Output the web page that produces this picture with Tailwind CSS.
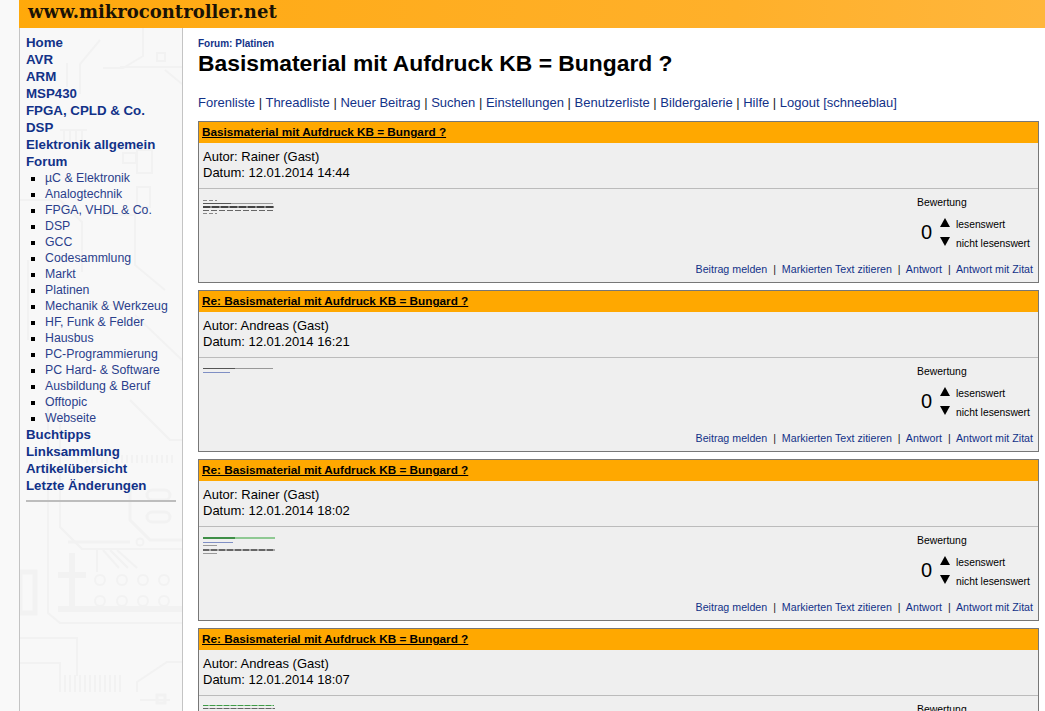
<!DOCTYPE html>
<html lang="de">

<head>
  <meta charset="UTF-8" />
  <title>Basismaterial mit Aufdruck KB = Bungard ?</title>
  <script src="https://cdn.jsdelivr.net/npm/@tailwindcss/browser@4"></script>
</head>

<body class="bg-[#f9f9f9] text-black h-[711px] overflow-hidden font-['Liberation_Sans',Arial,sans-serif]">
  <div class="flex flex-col h-full pl-[19px]">
    <!-- header -->
    <div class="h-[28px] shrink-0 pl-[9px] bg-gradient-to-r from-[#ffa90a] via-[#ffb02a] via-70% to-[#ffb63c] font-['DejaVu_Serif',serif] font-bold text-[18px] leading-[24px] text-[#1a1205]">www.mikrocontroller.net</div>

    <div class="flex flex-1 min-h-0">
      <!-- sidebar -->
      <div class="relative w-[164px] shrink-0 border-x border-[#c4c4c4] bg-[#f8f8f8] pl-[6px] pr-[6px] pt-[6px]">
        <!-- circuit board background, page coordinates -->
        <svg class="absolute inset-0 w-full h-full" viewBox="20 28 162 683" fill="none" stroke="#f2f2f2" stroke-width="2">
          <path d="M143 28v28l-20 12h-20M120 67h62M157 53h8v8h-8zM67 63v24M100 40l-20 24v30M165 70l17 14" />
          <path d="M60 130h27M64 130v20M70 130v20M76 130v20M82 130v20M137 150h15v23h-15zM137 187h13v20h-13zM123 153h13v10h-13z" />
          <path d="M20 200h40l22 22v50M100 215h35v50l30 25M95 305h50M135 315l47 45M28 260v80" />
          <path d="M48 400v213l12 10h122M60 400v127l22 22h100M130 400l40 40h12" />
          <path d="M87 455v8M92 455v8M97 455v8M102 455v8M107 455v8M112 455v8M117 455v8M122 455v8M127 455v8M132 455v8M137 455v8M142 455v8M147 455v8M152 455v8M157 455v8M162 455v8M167 455v8M172 455v8" />
          <rect x="147" y="490" width="23" height="10" rx="5" stroke-width="3" />
          <rect x="147" y="512" width="23" height="10" rx="5" stroke-width="3" />
          <path d="M130 480v40l20 20h32M68 542h62" stroke-width="3" />
          <circle cx="140" cy="542" r="3.5" />
          <path d="M97 550v22M103 550l16 18M110 550l18 18M117 550l20 18" />
          <path d="M72 553v55M58 575h28M58 609h124" stroke-width="6" />
          <path d="M20 572h15v41h-15z" stroke-width="5" />
          <circle cx="100" cy="580" r="5" />
          <circle cx="122" cy="580" r="5" />
          <circle cx="143" cy="580" r="5" />
          <circle cx="164" cy="580" r="5" />
          <circle cx="100" cy="601" r="5" />
          <circle cx="122" cy="601" r="5" />
          <circle cx="143" cy="601" r="5" />
          <circle cx="164" cy="601" r="5" />
          <path d="M20 638h57v38M20 663h40v12M137 692v-10l30-20h15M140 700h30" />
          <path d="M60 675v17M65 675v17M70 675v17M75 675v17M80 675v17M85 675v17M90 675v17M95 675v17M100 675v17M105 675v17M110 675v17M115 675v17M120 675v17" />
          <rect x="157" y="695" width="8" height="8" stroke-width="3" />
        </svg>
        <div class="relative">
          <ul class="text-[13.3px] leading-[17px] font-bold text-[#123288]">
            <li>Home</li>
            <li>AVR</li>
            <li>ARM</li>
            <li>MSP430</li>
            <li>FPGA, CPLD &amp; Co.</li>
            <li>DSP</li>
            <li>Elektronik allgemein</li>
            <li>Forum</li>
          </ul>
          <ul class="pl-[19px] list-[square] text-[12.3px] leading-[16px] text-[#2b3f8c] marker:text-black">
            <li>µC &amp; Elektronik</li>
            <li>Analogtechnik</li>
            <li>FPGA, VHDL &amp; Co.</li>
            <li>DSP</li>
            <li>GCC</li>
            <li>Codesammlung</li>
            <li>Markt</li>
            <li>Platinen</li>
            <li>Mechanik &amp; Werkzeug</li>
            <li>HF, Funk &amp; Felder</li>
            <li>Hausbus</li>
            <li>PC-Programmierung</li>
            <li>PC Hard- &amp; Software</li>
            <li>Ausbildung &amp; Beruf</li>
            <li>Offtopic</li>
            <li>Webseite</li>
          </ul>
          <ul class="text-[13.3px] leading-[17px] font-bold text-[#123288]">
            <li>Buchtipps</li>
            <li>Linksammlung</li>
            <li>Artikelübersicht</li>
            <li>Letzte Änderungen</li>
          </ul>
          <div class="mt-[6px] h-[2px] bg-[#bdbdbd]"></div>
        </div>
      </div>

      <!-- main -->
      <div class="flex-1 min-w-0 bg-white pl-[15px] pr-[6px] pt-[10px] overflow-hidden">
        <div class="text-[10px] leading-[12px] font-bold text-[#123288]">Forum: Platinen</div>
        <h1 class="text-[22.85px] leading-[27px] font-bold">Basismaterial mit Aufdruck KB = Bungard ?</h1>
        <div class="mt-[18px] text-[13px] leading-[16px] text-[#222] whitespace-nowrap">
          <span class="text-[#123288]">Forenliste</span> | <span class="text-[#123288]">Threadliste</span> | <span class="text-[#123288]">Neuer Beitrag</span> | <span class="text-[#123288]">Suchen</span> | <span class="text-[#123288]">Einstellungen</span> | <span class="text-[#123288]">Benutzerliste</span> | <span class="text-[#123288]">Bildergalerie</span> | <span class="text-[#123288]">Hilfe</span> | <span class="text-[#123288]">Logout [schneeblau]</span>
        </div>

        <div class="mt-[10px] flex flex-col gap-[7px]">
          <!-- post 1 -->
          <div class="border border-[#777] bg-[#efefef] h-[162px] flex flex-col">
            <div class="h-[21px] shrink-0 bg-[#ffa800] pl-[3px] text-[11.75px] leading-[19px] font-bold underline">Basismaterial mit Aufdruck KB = Bungard ?</div>
            <div class="h-[46px] shrink-0 border-b border-[#bbb] pl-[4px] pt-[6px] text-[13px] leading-[16px]">
              <div>Autor: Rainer (Gast)</div>
              <div>Datum: 12.01.2014 14:44</div>
            </div>
            <div class="flex flex-1 pl-[4px] pr-[5px]">
              <div class="flex-1 pt-[11px] flex flex-col gap-[2px] items-start">
                <div class="h-[1px] w-[14px] bg-[repeating-linear-gradient(90deg,#888_0,#888_4px,transparent_4px,transparent_6px)]"></div>
                <div class="h-[1px] w-[70px] bg-[linear-gradient(90deg,#555_0,#555_40%,#999_40%,#999_100%)]"></div>
                <div class="h-[2px] w-[71px] bg-[repeating-linear-gradient(90deg,#444_0,#444_7px,#888_7px,#888_9px)]"></div>
                <div class="h-[1px] w-[70px] bg-[repeating-linear-gradient(90deg,#666_0,#666_6px,transparent_6px,transparent_8px)]"></div>
                <div class="h-[1px] w-[14px] bg-[repeating-linear-gradient(90deg,#888_0,#888_4px,transparent_4px,transparent_6px)]"></div>
              </div>
              <div class="w-[116px] text-[10.4px] pt-[8px]">
                <div class="leading-[12px]">Bewertung</div>
                <div class="flex items-center mt-[2px]">
                  <div class="text-[20px] w-[17px] ml-[4px]">0</div>
                  <div class="w-[12px] ml-[1px] flex flex-col gap-[10px] items-center">
                    <div class="w-0 h-0 border-x-[5px] border-x-transparent border-b-[9px] border-b-black"></div>
                    <div class="w-0 h-0 border-x-[5px] border-x-transparent border-t-[9px] border-t-black"></div>
                  </div>
                  <div class="ml-[5px] mt-[4px] text-[10.3px] leading-[19px] whitespace-nowrap"><div>lesenswert</div><div>nicht lesenswert</div></div>
                </div>
              </div>
            </div>
            <div class="h-[24px] pt-[4px] text-right pr-[5px] text-[10.67px] leading-[14px] text-[#222] whitespace-nowrap"><span class="text-[#123288]">Beitrag melden</span> &nbsp;|&nbsp; <span class="text-[#123288]">Markierten Text zitieren</span> &nbsp;|&nbsp; <span class="text-[#123288]">Antwort</span> &nbsp;|&nbsp; <span class="text-[#123288]">Antwort mit Zitat</span></div>
          </div>

          <!-- post 2 -->
          <div class="border border-[#777] bg-[#efefef] h-[162px] flex flex-col">
            <div class="h-[21px] shrink-0 bg-[#ffa800] pl-[3px] text-[11.75px] leading-[19px] font-bold underline">Re: Basismaterial mit Aufdruck KB = Bungard ?</div>
            <div class="h-[46px] shrink-0 border-b border-[#bbb] pl-[4px] pt-[6px] text-[13px] leading-[16px]">
              <div>Autor: Andreas (Gast)</div>
              <div>Datum: 12.01.2014 16:21</div>
            </div>
            <div class="flex flex-1 pl-[4px] pr-[5px]">
              <div class="flex-1 pt-[10px] flex flex-col gap-[3px] items-start">
                <div class="h-[1px] w-[70px] bg-[linear-gradient(90deg,#555_0,#555_45%,#999_45%,#999_100%)]"></div>
                <div class="h-[1px] w-[27px] bg-[#7f8fc4]"></div>
              </div>
              <div class="w-[116px] text-[10.4px] pt-[8px]">
                <div class="leading-[12px]">Bewertung</div>
                <div class="flex items-center mt-[2px]">
                  <div class="text-[20px] w-[17px] ml-[4px]">0</div>
                  <div class="w-[12px] ml-[1px] flex flex-col gap-[10px] items-center">
                    <div class="w-0 h-0 border-x-[5px] border-x-transparent border-b-[9px] border-b-black"></div>
                    <div class="w-0 h-0 border-x-[5px] border-x-transparent border-t-[9px] border-t-black"></div>
                  </div>
                  <div class="ml-[5px] mt-[4px] text-[10.3px] leading-[19px] whitespace-nowrap"><div>lesenswert</div><div>nicht lesenswert</div></div>
                </div>
              </div>
            </div>
            <div class="h-[24px] pt-[4px] text-right pr-[5px] text-[10.67px] leading-[14px] text-[#222] whitespace-nowrap"><span class="text-[#123288]">Beitrag melden</span> &nbsp;|&nbsp; <span class="text-[#123288]">Markierten Text zitieren</span> &nbsp;|&nbsp; <span class="text-[#123288]">Antwort</span> &nbsp;|&nbsp; <span class="text-[#123288]">Antwort mit Zitat</span></div>
          </div>

          <!-- post 3 -->
          <div class="border border-[#777] bg-[#efefef] h-[162px] flex flex-col">
            <div class="h-[21px] shrink-0 bg-[#ffa800] pl-[3px] text-[11.75px] leading-[19px] font-bold underline">Re: Basismaterial mit Aufdruck KB = Bungard ?</div>
            <div class="h-[46px] shrink-0 border-b border-[#bbb] pl-[4px] pt-[6px] text-[13px] leading-[16px]">
              <div>Autor: Rainer (Gast)</div>
              <div>Datum: 12.01.2014 18:02</div>
            </div>
            <div class="flex flex-1 pl-[4px] pr-[5px]">
              <div class="flex-1 pt-[10px] flex flex-col gap-[2px] items-start">
                <div class="h-[2px] w-[72px] bg-[linear-gradient(90deg,#3f8f47_0,#3f8f47_45%,#8fc993_45%,#8fc993_100%)]"></div>
                <div class="h-[1px] mt-[1px] w-[30px] bg-[#7f8fc4]"></div>
                <div class="h-[1px] w-[14px] bg-[#999]"></div>
                <div class="h-[2px] mt-[1px] w-[72px] bg-[repeating-linear-gradient(90deg,#666_0,#666_6px,#aaa_6px,#aaa_8px)]"></div>
                <div class="h-[1px] w-[14px] bg-[#999]"></div>
              </div>
              <div class="w-[116px] text-[10.4px] pt-[8px]">
                <div class="leading-[12px]">Bewertung</div>
                <div class="flex items-center mt-[2px]">
                  <div class="text-[20px] w-[17px] ml-[4px]">0</div>
                  <div class="w-[12px] ml-[1px] flex flex-col gap-[10px] items-center">
                    <div class="w-0 h-0 border-x-[5px] border-x-transparent border-b-[9px] border-b-black"></div>
                    <div class="w-0 h-0 border-x-[5px] border-x-transparent border-t-[9px] border-t-black"></div>
                  </div>
                  <div class="ml-[5px] mt-[4px] text-[10.3px] leading-[19px] whitespace-nowrap"><div>lesenswert</div><div>nicht lesenswert</div></div>
                </div>
              </div>
            </div>
            <div class="h-[24px] pt-[4px] text-right pr-[5px] text-[10.67px] leading-[14px] text-[#222] whitespace-nowrap"><span class="text-[#123288]">Beitrag melden</span> &nbsp;|&nbsp; <span class="text-[#123288]">Markierten Text zitieren</span> &nbsp;|&nbsp; <span class="text-[#123288]">Antwort</span> &nbsp;|&nbsp; <span class="text-[#123288]">Antwort mit Zitat</span></div>
          </div>

          <!-- post 4 -->
          <div class="border border-[#777] bg-[#efefef] h-[162px] flex flex-col">
            <div class="h-[21px] shrink-0 bg-[#ffa800] pl-[3px] text-[11.75px] leading-[19px] font-bold underline">Re: Basismaterial mit Aufdruck KB = Bungard ?</div>
            <div class="h-[46px] shrink-0 border-b border-[#bbb] pl-[4px] pt-[6px] text-[13px] leading-[16px]">
              <div>Autor: Andreas (Gast)</div>
              <div>Datum: 12.01.2014 18:07</div>
            </div>
            <div class="flex flex-1 pl-[4px] pr-[5px]">
              <div class="flex-1 pt-[9px] flex flex-col gap-[2px] items-start">
                <div class="h-[1px] w-[71px] bg-[repeating-linear-gradient(90deg,#3f9a47_0,#3f9a47_5px,#8fc993_5px,#8fc993_7px)]"></div>
                <div class="h-[1px] w-[72px] bg-[repeating-linear-gradient(90deg,#666_0,#666_5px,#aaa_5px,#aaa_7px)]"></div>
              </div>
              <div class="w-[116px] text-[10.4px] pt-[8px]">
                <div class="leading-[12px]">Bewertung</div>
              </div>
            </div>
          </div>
        </div>
      </div>
    </div>
  </div>
</body>

</html>
